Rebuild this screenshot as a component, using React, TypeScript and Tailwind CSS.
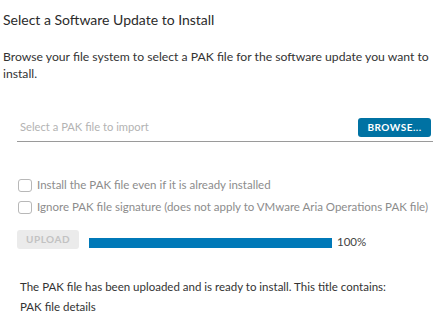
export default function App() {
  return (
    <div className="w-[445px] h-[316px] overflow-hidden bg-white font-['Lato',sans-serif] text-[#333]">
      <h1 className="mt-[10px] pl-[3px] text-[14px] leading-[20px] font-normal text-[#2b2b2b]">
        Select a Software Update to Install
      </h1>
      <p className="mt-[18px] pl-[3px] pr-[8px] text-[12.2px] leading-[17px] text-[#333]">
        Browse your file system to select a PAK file for the software update you want to install.
      </p>

      <div className="ml-[17px] mr-[12px] mt-[36px] flex items-center justify-between border-b border-[#9a9a9a] pb-[4px]">
        <span className="pl-[3px] text-[11.2px] text-[#b3b3b3]">Select a PAK file to import</span>
        <button className="mr-[2px] h-[19px] w-[73px] rounded-[3px] bg-[#0072a3] text-[10px] font-bold tracking-[0.5px] text-white">
          BROWSE...
        </button>
      </div>

      <div className="ml-[18px] mt-[32px] flex flex-col">
        <label className="flex h-[22px] items-center gap-[5px] whitespace-nowrap text-[11.5px] text-[#8c8c8c]">
          <span className="h-[13px] w-[14px] shrink-0 rounded-[3px] border border-[#b8b8b8] bg-white" />
          Install the PAK file even if it is already installed
        </label>
        <label className="flex h-[22px] items-center gap-[5px] whitespace-nowrap text-[11.5px] text-[#8c8c8c]">
          <span className="h-[13px] w-[14px] shrink-0 rounded-[3px] border border-[#b8b8b8] bg-white" />
          Ignore PAK file signature (does not apply to VMware Aria Operations PAK file)
        </label>
      </div>

      <div className="ml-[17px] mt-[12px] flex items-end">
        <button className="h-[19px] w-[62px] rounded-[3px] bg-[#ebebeb] text-[10px] font-bold tracking-[0.5px] text-[#c2c2c2]">
          UPLOAD
        </button>
        <div className="mb-[1px] ml-[10px] h-[10px] w-[243px] bg-[#0079b8]" />
        <span className="ml-[5px] text-[11.5px] leading-[14px] text-[#444]">100%</span>
      </div>

      <div className="mt-[28px] pl-[20px] text-[11.5px] leading-[20px] text-[#333]">
        <p>The PAK file has been uploaded and is ready to install. This title contains:</p>
        <p>PAK file details</p>
      </div>
    </div>
  );
}
